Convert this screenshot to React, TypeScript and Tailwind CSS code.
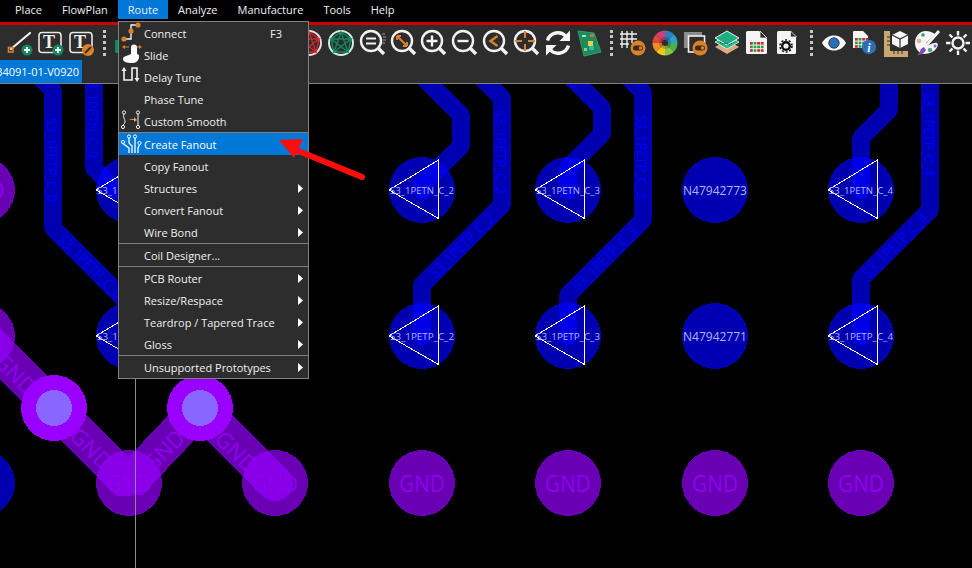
import type { ReactNode } from 'react'

const ORANGE = '#d9822b'
const GREEN = '#0f8a5f'

const topMenu = ['Place', 'FlowPlan', 'Route', 'Analyze', 'Manufacture', 'Tools', 'Help']

function Ico({ className = '', children }: { className?: string; children: ReactNode }) {
  return (
    <svg className={`h-[30px] w-[30px] shrink-0 ${className}`} viewBox="0 0 30 30" fill="none">
      {children}
    </svg>
  )
}

function Dots({ className = '' }: { className?: string }) {
  return <div className={`h-[26px] w-[3px] shrink-0 border-l-[3px] border-dotted border-[#c8c8c8] ${className}`} />
}

function Plus({ cx, cy }: { cx: number; cy: number }) {
  return (
    <g>
      <circle cx={cx} cy={cy} r="5.5" fill={GREEN} />
      <path d={`M${cx - 3} ${cy}h6M${cx} ${cy - 3}v6`} stroke="#fff" strokeWidth="1.8" />
    </g>
  )
}

function TBox({ x, children }: { x: number; children: ReactNode }) {
  return (
    <>
      <rect x={x} y="4.5" width="22" height="20" rx="3" stroke="#e8e8e8" strokeWidth="1.6" />
      <text x={x + 10} y="20" textAnchor="middle" fill="#f0f0f0" fontSize="18" fontWeight="700" className="font-['Liberation_Serif',serif]">
        T
      </text>
      {children}
    </>
  )
}

function Lens({ className, children }: { className?: string; children?: ReactNode }) {
  return (
    <Ico className={className}>
      <circle cx="14" cy="13" r="10" stroke="#f2f2f2" strokeWidth="2.4" />
      <path d="M21.5 20.5 27 26" stroke="#f2f2f2" strokeWidth="3.4" />
      {children}
    </Ico>
  )
}

function Star({ className, color, ring }: { className?: string; color: string; ring: string }) {
  return (
    <Ico className={className}>
      <circle cx="15" cy="15" r="12" stroke={ring} strokeWidth="2" />
      <path d="M15 4 22 24 5 11H25L8 24Z M15 4 25 11 22 24H8L5 11Z" stroke={color} strokeWidth="1.4" />
    </Ico>
  )
}

function Pill({ cx, cy }: { cx: number; cy: number }) {
  return (
    <g>
      <circle cx={cx} cy={cy} r="7.5" fill={ORANGE} />
      <rect x={cx - 5} y={cy - 2.5} width="10" height="5" rx="2.5" fill="#3a2a1a" />
      <circle cx={cx + 2.5} cy={cy} r="1.8" fill={ORANGE} />
    </g>
  )
}

function wedge(i: number) {
  const a0 = ((i * 45 - 90) * Math.PI) / 180
  const a1 = (((i + 1) * 45 - 90) * Math.PI) / 180
  const r = 12.5
  return `M15 15L${15 + r * Math.cos(a0)} ${15 + r * Math.sin(a0)}A${r} ${r} 0 0 1 ${15 + r * Math.cos(a1)} ${15 + r * Math.sin(a1)}Z`
}

function Cells({ x, y }: { x: number; y: number }) {
  return (
    <g>
      {[0, 1, 2].map((r) =>
        [0, 1, 2, 3].map((c) => (
          <rect key={`${r}-${c}`} x={x + c * 3.6} y={y + r * 3.6} width="2.8" height="2.6" fill={r === 1 || c === 1 ? '#2a9d4a' : '#d4242c'} />
        )),
      )}
    </g>
  )
}

function Toolbar() {
  return (
    <div className="flex h-[35px] items-center bg-[#2d2d2d]">
      <Ico className="ml-[5px]">
        <path d="M6 21 25 5" stroke="#f0f0f0" strokeWidth="2.2" strokeLinecap="round" />
        <rect x="3.5" y="19.5" width="4.5" height="4.5" stroke={ORANGE} strokeWidth="1.6" />
        <Plus cx={22} cy={22} />
      </Ico>
      <Ico>
        <TBox x={4}>
          <Plus cx={23} cy={22} />
        </TBox>
      </Ico>
      <Ico className="ml-[2px]">
        <TBox x={3}>
          <circle cx="21" cy="22" r="6" fill={ORANGE} />
          <path d="M18 25 24 19" stroke="#3a2a1a" strokeWidth="2" />
        </TBox>
      </Ico>
      <Dots className="ml-[6px]" />
      <Ico className="ml-[9px]">
        <rect x="0" y="12" width="6" height="13" rx="1" fill={GREEN} />
      </Ico>
      <div className="ml-[149px] w-0" />
      <Star color="#d4242c" ring="#f0d8d8" />
      <Star className="ml-[2px]" color={GREEN} ring="#cfeee2" />
      <Lens className="ml-[1px]">
        <path d="M9 10.5h10M9 15.5h10" stroke="#f2f2f2" strokeWidth="2.2" />
        <path d="M25 6h3M26 9h3M26 12h3M25 15h3" stroke="#999" strokeWidth="1" />
      </Lens>
      <Lens className="ml-[1px]">
        <path d="M9 8l10 10M9 8h4M9 8v4M19 18h-4M19 18v-4" stroke={ORANGE} strokeWidth="2" />
      </Lens>
      <Lens>
        <path d="M8.5 13h11M14 7.5v11" stroke="#f2f2f2" strokeWidth="2.4" />
      </Lens>
      <Lens className="ml-[1px]">
        <path d="M8.5 13h11" stroke="#f2f2f2" strokeWidth="2.4" />
      </Lens>
      <Lens className="ml-[1px]">
        <path d="M17.5 8 10.5 13l7 5" stroke={ORANGE} strokeWidth="2.4" />
      </Lens>
      <Lens className="ml-[1px]">
        <path d="M4 13h7M17 13h7M14 3v7M14 16v7" stroke={ORANGE} strokeWidth="2" />
      </Lens>
      <Ico className="ml-[2px]">
        <path d="M4.5 12.5A10.8 10.8 0 0 1 23 8.5" stroke="#f5f5f5" strokeWidth="3.4" />
        <path d="M27 2.5V13H16.5Z" fill="#f5f5f5" />
        <path d="M25.5 17.5A10.8 10.8 0 0 1 7 21.5" stroke="#f5f5f5" strokeWidth="3.4" />
        <path d="M3 27.5V17H13.5Z" fill="#f5f5f5" />
      </Ico>
      <Ico className="ml-[1px]">
        <path d="M4 3 20 5 27 24 10 28Z" fill="#1d8a58" />
        <path d="M4 3 20 5 27 24 10 28Z" stroke="#2aa06c" strokeWidth="1" />
        <rect x="14" y="13" width="5" height="5" fill="#e8d040" />
        <rect x="15" y="18" width="5" height="4" fill="#30b0c0" />
        <rect x="16" y="6" width="4" height="3" fill="#c07060" />
        <rect x="8" y="7" width="4" height="2" fill="#a8e0c0" />
        <rect x="10" y="20" width="3" height="3" fill="#90c8a8" />
      </Ico>
      <Dots className="ml-[6px]" />
      <Ico className="ml-[5px]">
        <path d="M4 3v17M9 3v17M14 3v12M2 6h17M2 11h17M2 16h9" stroke="#f0f0f0" strokeWidth="1.4" />
        <Pill cx={20} cy={20} />
      </Ico>
      <Ico className="ml-[2px]">
        {['#2a7fc0', '#2f9fc8', '#4caf50', '#8bc34a', '#f5c518', '#f08a24', '#e0433a', '#d93a78'].map((c, i) => (
          <path key={c} d={wedge(i)} fill={c} />
        ))}
        <circle cx="15" cy="15" r="6" fill="#00000030" />
        <circle cx="15" cy="15" r="3" fill="#2d2d2d" />
      </Ico>
      <Ico>
        <rect x="4" y="4" width="18" height="16" fill="#8c8c8c" />
        <rect x="8.5" y="8" width="16" height="16" fill="#2d2d2d" stroke="#f0f0f0" strokeWidth="1.6" />
        <Pill cx={20} cy={20} />
      </Ico>
      <Ico className="ml-[2px]">
        <path d="M15 12 27 19 15 26 3 19Z" fill="#e0a880" />
        <path d="M15 7 27 14 15 21 3 14Z" fill="#18c090" stroke="#f0f0f0" strokeWidth="0.8" />
        <path d="M15 3 27 10 15 17 3 10Z" fill="#1fae80" stroke="#f0f0f0" strokeWidth="1" />
        <path d="M8 14l3 2 3-1 3 2 3-2" stroke="#14433a" strokeWidth="1" strokeDasharray="1.5 1" />
      </Ico>
      <Ico>
        <path d="M4 4.5A1.5 1.5 0 0 1 5.5 3H17L25 11V24.5A1.5 1.5 0 0 1 23.5 26H5.5A1.5 1.5 0 0 1 4 24.5Z" fill="#f5f5f5" />
        <path d="M18 3v7h7Z" fill="#2d2d2d" stroke="#f5f5f5" strokeWidth="0.8" />
        <Cells x={8} y={14} />
      </Ico>
      <Ico>
        <path d="M5 4.5A1.5 1.5 0 0 1 6.5 3H18L24 9V24.5A1.5 1.5 0 0 1 22.5 26H6.5A1.5 1.5 0 0 1 5 24.5Z" fill="#f5f5f5" />
        <path d="M18.5 3v6h6Z" fill="#2d2d2d" stroke="#f5f5f5" strokeWidth="0.8" />
        <circle cx="14" cy="18" r="3.8" stroke="#111" strokeWidth="2.4" />
        <circle cx="14" cy="18" r="6" stroke="#111" strokeWidth="1.6" strokeDasharray="2 1.8" />
      </Ico>
      <Dots className="ml-[8px]" />
      <Ico className="ml-[6px]">
        <path d="M3 15C8 5 22 5 27 15 22 25 8 25 3 15Z" fill="#f8f8f8" />
        <circle cx="15" cy="15" r="5.2" fill="#2a6fb8" stroke="#222" strokeWidth="0.8" />
      </Ico>
      <Ico className="ml-[1px]">
        <path d="M3 4A1 1 0 0 1 4 3H13L18 8V20H3Z" fill="#f5f5f5" />
        <Cells x={5} y={10} />
        <circle cx="19" cy="19" r="7.2" fill="#2a6fb8" />
        <text x="19" y="23.5" textAnchor="middle" fill="#fff" fontSize="12" fontWeight="700" fontStyle="italic" className="font-['Liberation_Serif',serif]">
          i
        </text>
      </Ico>
      <Ico className="ml-[1px]">
        <path d="M3 3h6v20h18v6H3Z" fill="#c8a870" />
        <path d="M9 9h-3M9 13h-3M9 17h-3M13 23v3M17 23v3M21 23v3" stroke="#2d2d2d" strokeWidth="1" />
        <path d="M19 3 27 7V16L19 20 11 16V7Z" fill="#f8f8f8" />
        <path d="M11 7 19 11 27 7M19 11V20" stroke="#2d2d2d" strokeWidth="1.2" />
      </Ico>
      <Ico className="ml-[1px]">
        <path d="M14 3C7 3 3 9 3 15c0 6 4 10 9 11 3 0 7-1 10-3 3-3 5-6 3-8-2-1-6 1-10 3l-1-3 9-9C20 4 17 3 14 3Z" fill="#f5f5f5" />
        <path d="M27 3 12 20l-2 2" stroke="#f5f5f5" strokeWidth="3" />
        <path d="M12 19c-3 1-4 3-4 5l-3 3c3 0 7-1 9-5Z" fill="#7d4fb0" />
        <circle cx="11" cy="7" r="1.8" fill="#2a9d6a" />
        <circle cx="7" cy="13" r="2.3" fill="#d8b48a" />
        <circle cx="18" cy="22" r="2.2" fill="#5a9d8a" />
        <circle cx="23" cy="18" r="1.5" fill="#a050d0" />
      </Ico>
      <Ico className="ml-[1px]">
        <circle cx="15" cy="15" r="5.5" stroke="#f5f5f5" strokeWidth="2.4" />
        <path d="M15 3v4.5M15 22.500V27M3 15h4.500M22.500 15H27M6.500 6.500l3 3M20.500 20.500l3 3M23.500 6.500l-3 3M9.500 20.500l-3 3" stroke="#f5f5f5" strokeWidth="2.4" />
      </Ico>
    </div>
  )
}

type Item = { label: string; icon?: ReactNode; sub?: boolean; key?: string; active?: boolean }

const stroke = { stroke: '#f2f2f2', strokeWidth: 1.4, fill: 'none' }

const sections: Item[][] = [
  [
    {
      label: 'Connect',
      key: 'F3',
      icon: (
        <>
          <path d="M4 17H11V3H18" {...stroke} />
          <circle cx="18" cy="3" r="2.6" fill={ORANGE} />
          <circle cx="11" cy="9" r="2.6" fill={ORANGE} />
          <circle cx="4" cy="17" r="2.6" fill={ORANGE} />
        </>
      ),
    },
    {
      label: 'Slide',
      icon: (
        <>
          <path d="M4 3h5M16 3h4" stroke={ORANGE} strokeWidth="1.2" />
          <path d="M2 3 5 1V5ZM22 3 19 1V5Z" fill={ORANGE} />
          <path d="M11 3.5a3 3 0 0 1 6 0V10l2 1v3c-1 3-3 5-7 5-5 0-9-1-9-4 0-3 4-3 8-5Z" fill="#fafafa" />
        </>
      ),
    },
    {
      label: 'Delay Tune',
      icon: (
        <>
          <path d="M4 3V14H12V2H17V13" {...stroke} strokeWidth={1.6} />
          <path d="M1.5 5 4 1 6.5 5ZM14.5 12 17 16 19.5 12Z" fill="#f2f2f2" />
        </>
      ),
    },
    { label: 'Phase Tune' },
    {
      label: 'Custom Smooth',
      icon: (
        <>
          <path d="M4 4C2 8 8 11 3 15M18 4V15" {...stroke} strokeWidth={1} />
          <circle cx="4" cy="2.5" r="1.6" {...stroke} strokeWidth={1} />
          <circle cx="3" cy="17" r="1.6" {...stroke} strokeWidth={1} />
          <circle cx="18" cy="2.5" r="1.6" {...stroke} strokeWidth={1} />
          <circle cx="18" cy="17" r="1.6" {...stroke} strokeWidth={1} />
          <path d="M9 10c1-1 3-1 5-1V7l3 3-3 2v-2Z" fill="#d8a060" />
        </>
      ),
    },
  ],
  [
    {
      label: 'Create Fanout',
      active: true,
      icon: (
        <>
          <path d="M3 10.5 9 15V20M9 5V10L12 13V20M15 5V20M19.5 12 18 15V20" stroke="#fff" strokeWidth="1.3" fill="none" />
          <circle cx="3" cy="9" r="1.6" fill="none" stroke="#fff" />
          <circle cx="9" cy="3.5" r="1.6" fill="none" stroke="#fff" />
          <circle cx="15" cy="3.5" r="1.6" fill="none" stroke="#fff" />
          <circle cx="19.5" cy="10" r="1.6" fill="none" stroke="#fff" />
        </>
      ),
    },
    { label: 'Copy Fanout' },
    { label: 'Structures', sub: true },
    { label: 'Convert Fanout', sub: true },
    { label: 'Wire Bond', sub: true },
  ],
  [{ label: 'Coil Designer...' }],
  [
    { label: 'PCB Router', sub: true },
    { label: 'Resize/Respace', sub: true },
    { label: 'Teardrop / Tapered Trace', sub: true },
    { label: 'Gloss', sub: true },
  ],
  [{ label: 'Unsupported Prototypes', sub: true }],
]

function RouteMenu() {
  return (
    <div className="absolute left-[118px] top-[21px] z-20 w-[191px] border border-[#808080] bg-[#2d2d2d] text-[#f0f0f0]">
      {sections.map((items, s) => (
        <div key={s} className="border-b border-[#808080] last:border-b-0">
          {items.map((it) => (
            <div key={it.label} className={`flex h-[22px] items-center ${it.active ? 'bg-[#0078d7] text-white' : ''}`}>
              <div className="h-[22px] w-[25px] shrink-0">
                {it.icon && (
                  <svg className="ml-[1px] h-[22px] w-[24px] overflow-visible" viewBox="0 0 24 22">
                    {it.icon}
                  </svg>
                )}
              </div>
              <span>{it.label}</span>
              {it.key && <span className="ml-auto mr-[26px]">{it.key}</span>}
              {it.sub && (
                <svg className="ml-auto mr-[5px] h-[9px] w-[5px]" viewBox="0 0 5 9">
                  <path d="M0 0 5 4.5 0 9Z" fill="#fff" />
                </svg>
              )}
            </div>
          ))}
        </div>
      ))}
    </div>
  )
}

function Pad({ x, y, label, purple, tri, small }: { x: number; y: number; label: string; purple?: boolean; tri?: boolean; small?: boolean }) {
  return (
    <g>
      <circle cx={x} cy={y} r="33" fill={purple ? '#9600ff' : '#0000ff'} fillOpacity="0.7" />
      {tri && <path d={`M${x + 16.5} ${y - 30}V${y + 28.5}L${x - 33} ${y}Z`} fill="none" stroke="#fff" strokeWidth="1" />}
      <text
        x={x}
        y={y}
        textAnchor="middle"
        dominantBaseline="central"
        fill={purple ? '#8f00f0' : '#b4b4e8'}
        fontSize={purple ? 23 : small ? 6 : tri ? 9.5 : 12}
        {...(tri ? { textLength: 64, lengthAdjust: 'spacingAndGlyphs' as const } : {})}
        {...(purple ? { textLength: 46, lengthAdjust: 'spacingAndGlyphs' as const } : {})}
      >
        {label}
      </text>
    </g>
  )
}

function Wire({ d, purple }: { d: string; purple?: boolean }) {
  return (
    <path
      d={d}
      fill="none"
      stroke={purple ? '#9600ff' : '#0000ff'}
      strokeOpacity="0.7"
      strokeWidth={purple ? 36 : 18}
      strokeLinecap="round"
      strokeLinejoin="bevel"
    />
  )
}

function Tag({ x, y, r, label, purple }: { x: number; y: number; r: number; label: string; purple?: boolean }) {
  return (
    <text
      x={x}
      y={y}
      transform={`rotate(${r} ${x} ${y})`}
      textAnchor="middle"
      dominantBaseline="central"
      fill={purple ? '#8f00f0' : '#0000f4'}
      fontSize={purple ? 22 : 15}
      {...(purple ? {} : { textLength: 84, lengthAdjust: 'spacingAndGlyphs' as const })}
    >
      {label}
    </text>
  )
}

function Board() {
  return (
    <svg className="block h-[484px] w-[972px] font-['Open_Sans',sans-serif]" viewBox="0 84 972 484" shapeRendering="crispEdges">
      <Wire d="M30 67 53 90V228L129 304V336" />
      <Wire d="M94 70V168L116 190H129" />
      <Wire d="M420 74 461 115V146L422 185V190" />
      <Wire d="M475 71 502 98V205L422 285V336" />
      <Wire d="M566 72 602 108V134L568 168V190" />
      <Wire d="M625 74 643 92V220L568 295V336" />
      <Wire d="M889 70V110L861 138V190" />
      <Wire d="M930 70V210L861 279V336" />
      <Wire purple d="M-18 336 54 408 129 483 200 408 275 483" />

      <Pad x={-18} y={190} label="GND" purple />
      <Pad x={-18} y={336} label="GND" purple />
      <Pad x={-18} y={483} label="N47942769" small />
      <Pad x={129} y={190} label="S3_1PETN_C_0" tri />
      <Pad x={129} y={336} label="S3_1PETP_C_0" tri />
      <Pad x={422} y={190} label="S3_1PETN_C_2" tri />
      <Pad x={422} y={336} label="S3_1PETP_C_2" tri />
      <Pad x={568} y={190} label="S3_1PETN_C_3" tri />
      <Pad x={568} y={336} label="S3_1PETP_C_3" tri />
      <Pad x={715} y={190} label="N47942773" />
      <Pad x={715} y={336} label="N47942771" />
      <Pad x={861} y={190} label="S3_1PETN_C_4" tri />
      <Pad x={861} y={336} label="S3_1PETP_C_4" tri />
      {[129, 275, 422, 568, 715, 861].map((x) => (
        <Pad key={x} x={x} y={483} label="GND" purple />
      ))}

      <Tag x={53} y={160} r={90} label="S3_1PETP_C_0" />
      <Tag x={91} y={266} r={45} label="S3_1PETP_C_0" />
      <Tag x={94} y={116} r={90} label="S3_1PETN_C_0" />
      <Tag x={502} y={152} r={90} label="S3_1PETP_C_2" />
      <Tag x={462} y={245} r={-45} label="S3_1PETP_C_2" />
      <Tag x={643} y={157} r={90} label="S3_1PETP_C_3" />
      <Tag x={605} y={258} r={-45} label="S3_1PETP_C_3" />
      <Tag x={549} y={55} r={45} label="S3_1PETN_C_3" />
      <Tag x={930} y={134} r={90} label="S3_1PETP_C_4" />
      <Tag x={895} y={245} r={-45} label="S3_1PETP_C_4" />
      <Tag x={16} y={373} r={45} label="GND" purple />
      <Tag x={92} y={448} r={45} label="GND" purple />
      <Tag x={163} y={450} r={-45} label="GND" purple />
      <Tag x={237} y={451} r={45} label="GND" purple />

      <circle cx="54" cy="408" r="33" fill="#9900ff" />
      <circle cx="54" cy="408" r="18" fill="#8866ff" />
      <circle cx="200" cy="408" r="33" fill="#9900ff" />
      <circle cx="200" cy="408" r="18" fill="#8866ff" />
      <path d="M135.5 84V568" stroke="#8c8c8c" strokeWidth="1" />
    </svg>
  )
}

// red callout drawn over the open menu
function Callout() {
  return (
    <svg className="absolute left-[270px] top-[130px] z-30 h-[60px] w-[100px]" viewBox="270 130 100 60">
      <path d="M362 177 296 150" stroke="#ff0d0d" strokeWidth="6" strokeLinecap="round" />
      <path d="M279 140 303 139 294 158Z" fill="#ff0d0d" />
    </svg>
  )
}

export default function App() {
  return (
    <div className="relative h-[568px] w-[972px] overflow-hidden bg-black font-['Open_Sans',sans-serif] text-[11px] leading-none text-[#f0f0f0]">
      <div className="flex h-[22px] pl-[5px] pb-[3px]">
        {topMenu.map((m) => (
          <div key={m} className={`flex items-center px-[10px] ${m === 'Route' ? 'bg-[#0078d7]' : ''}`}>
            {m}
          </div>
        ))}
      </div>
      <div className="h-[3px] bg-[#cc0000]" />
      <Toolbar />
      <div className="h-[23px] bg-[#2d2d2d]">
        <div className="flex h-full w-[82px] items-center justify-end overflow-hidden whitespace-nowrap bg-[#0078d7] pr-[3px] text-white">
          <span className="shrink-0">34091-01-V0920</span>
        </div>
      </div>
      <div className="h-px bg-[#808080]" />
      <Board />
      <RouteMenu />
      <Callout />
    </div>
  )
}
